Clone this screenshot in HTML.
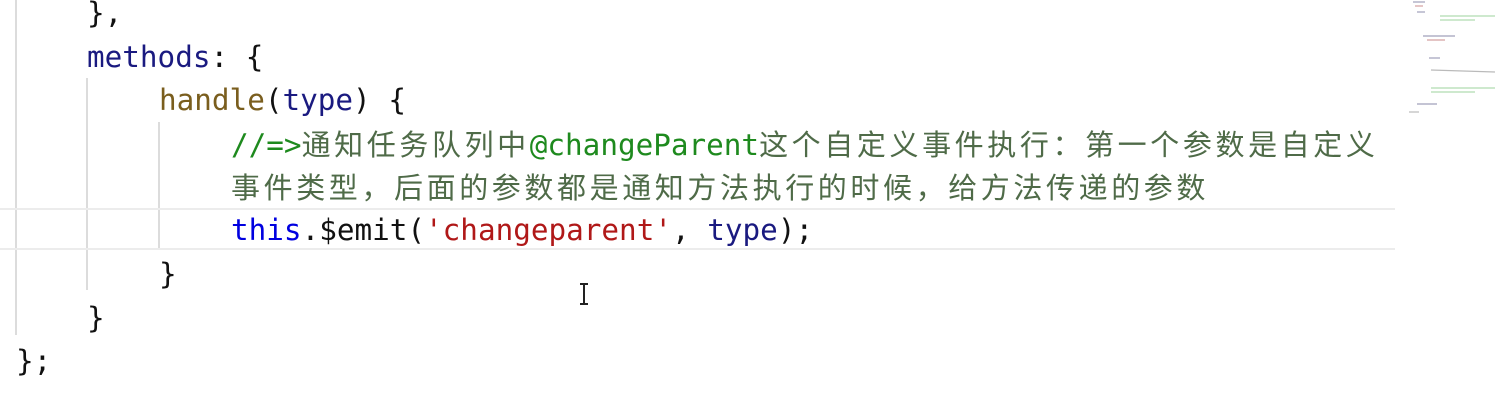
<!DOCTYPE html>
<html><head><meta charset="utf-8"><style>
html,body{margin:0;padding:0;background:#fff;width:1502px;height:409px;overflow:hidden;position:relative}
.l{position:absolute;white-space:pre;font-family:"DejaVu Sans Mono","Noto Sans CJK SC",monospace;font-size:29.3px;line-height:44px;color:#111;letter-spacing:0}
.c{font-family:"Noto Sans CJK SC",sans-serif;font-size:29px;letter-spacing:3.6px;color:#4f6b48}
.g{color:#1e8a1e}
.nv{color:#1a1a80}
.fn{color:#7a5e1e}
.kw{color:#0000e0}
.st{color:#b01818}
.v{position:absolute;width:2px;background:#dcdcdc}
.h{position:absolute;height:2px;background:#ececec}
</style></head><body>
<div class="v" style="left:15px;top:0;height:335px"></div>
<div class="v" style="left:86px;top:78px;height:212px"></div>
<div class="v" style="left:158px;top:122px;height:128px"></div>
<div class="h" style="left:0;top:208px;width:1395px"></div>
<div class="h" style="left:0;top:248px;width:1395px"></div>

<div class="l" style="left:87px;top:-9px">},</div>
<div class="l" style="left:87px;top:35px"><span class="nv">methods</span>: {</div>
<div class="l" style="left:159px;top:78px"><span class="fn">handle</span>(<span class="nv">type</span>) {</div>
<div class="l" style="left:231px;top:121px"><span class="g">//=&gt;</span><span class="c">通知任务队列中</span><span class="g">@changeParent</span><span class="c">这个自定义事件执行：第一个参数是自定义</span></div>
<div class="l" style="left:231px;top:164px"><span class="c">事件类型，后面的参数都是通知方法执行的时候，给方法传递的参数</span></div>
<div class="l" style="left:231px;top:208px"><span class="kw">this</span>.$emit(<span class="st">'changeparent'</span>, <span class="nv">type</span>);</div>
<div class="l" style="left:159px;top:252px">}</div>
<div class="l" style="left:87px;top:296px">}</div>
<div class="l" style="left:16px;top:339px">};</div>

<svg style="position:absolute;left:577px;top:282px" width="14" height="24">
<path d="M3 2H11M7 2V22M3 22H11" stroke="#222" stroke-width="2" fill="none"/>
</svg>

<svg style="position:absolute;left:1395px;top:0" width="107" height="130">
<g stroke-width="1.2" opacity="0.5">
<line x1="18" y1="2" x2="30" y2="2" stroke="#447"/>
<line x1="20" y1="6" x2="28" y2="6" stroke="#a44"/>
<line x1="22" y1="12" x2="30" y2="12" stroke="#447"/>
<line x1="45" y1="16" x2="100" y2="16" stroke="#6b6"/>
<line x1="45" y1="20" x2="80" y2="20" stroke="#6b6"/>
<line x1="28" y1="36" x2="60" y2="36" stroke="#447"/>
<line x1="32" y1="40" x2="50" y2="40" stroke="#a44"/>
<line x1="34" y1="58" x2="45" y2="58" stroke="#447"/>
<line x1="36" y1="70" x2="100" y2="72" stroke="#777"/>
<line x1="36" y1="88" x2="100" y2="88" stroke="#6b6"/>
<line x1="36" y1="92" x2="80" y2="92" stroke="#6b6"/>
<line x1="22" y1="104" x2="42" y2="104" stroke="#447"/>
<line x1="14" y1="112" x2="24" y2="112" stroke="#777"/>
</g></svg>
</body></html>
